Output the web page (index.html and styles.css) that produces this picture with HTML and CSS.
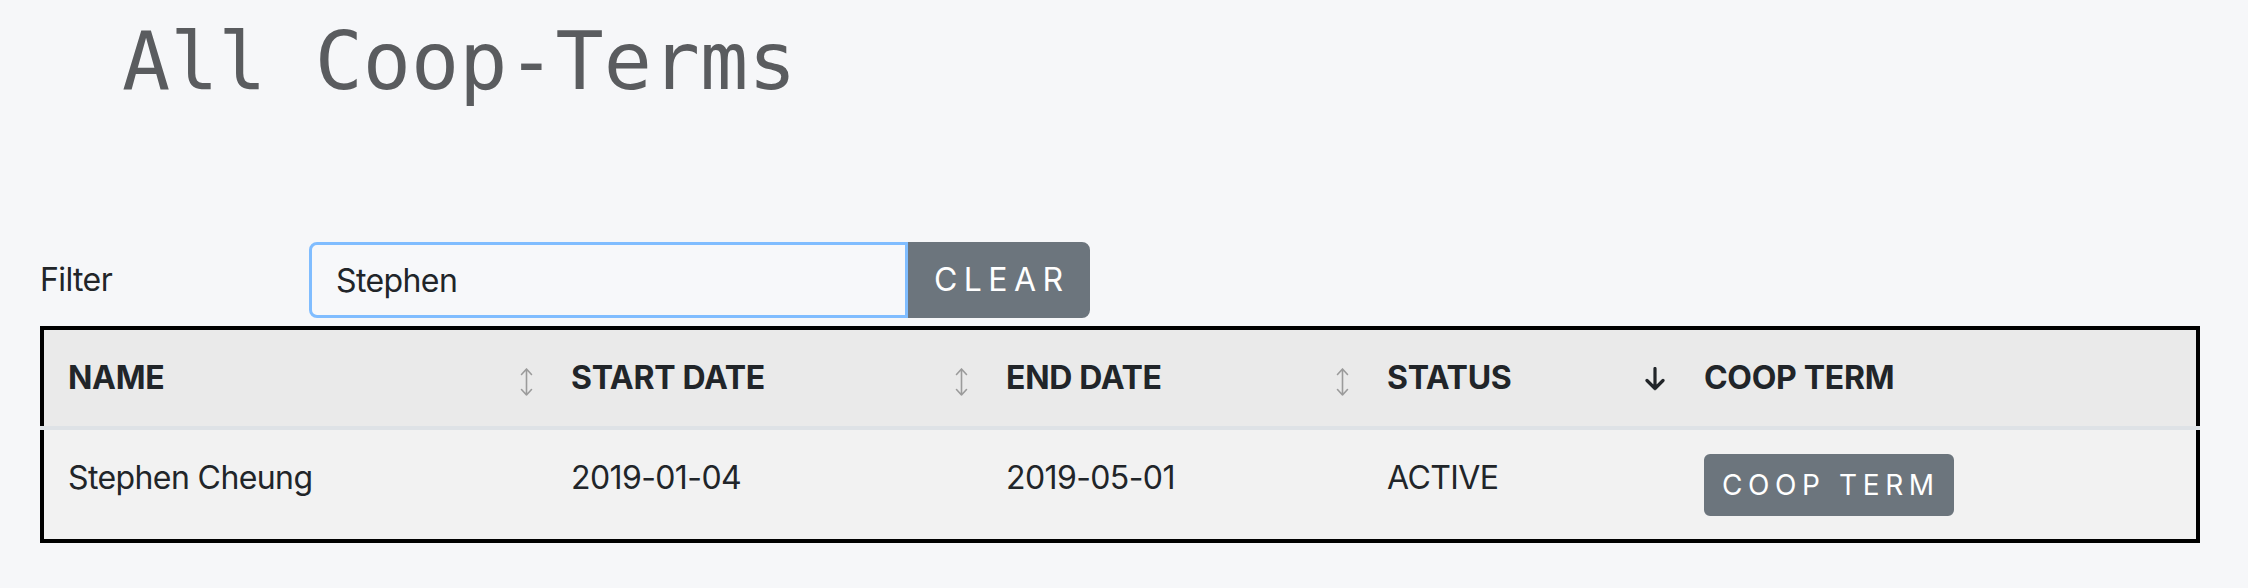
FILE: index.html
```html
<!DOCTYPE html>
<html lang="en">
<head>
<meta charset="utf-8">
<title>All Coop-Terms</title>
<link rel="stylesheet" href="styles.css">
</head>
<body>
<div class="page">
  <h1 class="title">All Coop-Terms</h1>

  <div class="filter-row">
    <label class="filter-label" for="filter">Filter</label>
    <div class="input-group">
      <input id="filter" class="filter-input" type="text" value="Stephen">
      <button class="btn btn-clear" type="button">Clear</button>
    </div>
  </div>

  <div class="grid-table">
    <div class="thead row">
      <div class="th">
        <span>Name</span>
        <svg class="sort-icon" viewBox="0 0 13 30" width="13" height="30"><path d="M6.5 2V28M1.5 7.5L6.5 2L11.5 7.5M1.5 22.5L6.5 28L11.5 22.5" fill="none" stroke="#9b9b9b" stroke-width="1.6" stroke-linecap="round" stroke-linejoin="round"/></svg>
      </div>
      <div class="th">
        <span>Start Date</span>
        <svg class="sort-icon" viewBox="0 0 13 30" width="13" height="30"><path d="M6.5 2V28M1.5 7.5L6.5 2L11.5 7.5M1.5 22.5L6.5 28L11.5 22.5" fill="none" stroke="#9b9b9b" stroke-width="1.6" stroke-linecap="round" stroke-linejoin="round"/></svg>
      </div>
      <div class="th">
        <span>End Date</span>
        <svg class="sort-icon" viewBox="0 0 13 30" width="13" height="30"><path d="M6.5 2V28M1.5 7.5L6.5 2L11.5 7.5M1.5 22.5L6.5 28L11.5 22.5" fill="none" stroke="#9b9b9b" stroke-width="1.6" stroke-linecap="round" stroke-linejoin="round"/></svg>
      </div>
      <div class="th">
        <span>Status</span>
        <svg class="sort-icon sort-active" viewBox="0 0 22 24" width="22" height="24"><path d="M11 1.5V21.5M3 13.5L11 21.5L19 13.5" fill="none" stroke="#212529" stroke-width="3.2" stroke-linecap="round" stroke-linejoin="round"/></svg>
      </div>
      <div class="th">
        <span>Coop Term</span>
      </div>
    </div>
    <div class="sep"></div>
    <div class="tbody row">
      <div class="td">Stephen Cheung</div>
      <div class="td">2019-01-04</div>
      <div class="td">2019-05-01</div>
      <div class="td">ACTIVE</div>
      <div class="td"><button class="btn btn-sm" type="button">Coop Term</button></div>
    </div>
  </div>
</div>
</body>
</html>
```

FILE: styles.css
```css
html, body {
  margin: 0;
  padding: 0;
  background: #f6f7f9;
}

body {
  font-family: Inter, "Noto Sans", "Liberation Sans", sans-serif;
  color: #212529;
  font-size: 32px;
  line-height: 1.5;
}

.page {
  padding: 14px 48px 0 40px;
}

.title {
  margin: 0 0 132px 0;
  padding-left: 82px;
  font-family: "DejaVu Sans Mono", "Liberation Mono", monospace;
  font-weight: 400;
  font-size: 80px;
  line-height: 96px;
  color: #5a5c5f;
}

.filter-row {
  display: flex;
  align-items: center;
  margin-bottom: 8px;
}

.filter-label {
  width: 269px;
  font-size: 32px;
  line-height: 48px;
  letter-spacing: -0.6px;
}

.input-group {
  display: flex;
}

.filter-input {
  box-sizing: border-box;
  width: 599px;
  height: 76px;
  margin: 0;
  padding: 12px 24px;
  border: 3px solid #80bdff;
  border-radius: 8px 0 0 8px;
  background: #f7f8fa;
  color: #212529;
  font-family: Inter, "Noto Sans", "Liberation Sans", sans-serif;
  font-size: 32px;
  line-height: 48px;
  letter-spacing: -0.6px;
  outline: none;
}

.btn {
  box-sizing: border-box;
  margin: 0;
  border: 2px solid #6c757d;
  background: #6c757d;
  color: #ffffff;
  font-family: Inter, "Noto Sans", "Liberation Sans", sans-serif;
  font-weight: 400;
  text-transform: uppercase;
  letter-spacing: 0.2em;
  cursor: pointer;
}

.btn-clear {
  height: 76px;
  width: 182px;
  padding: 12px 18px 12px 24px;
  font-size: 32px;
  line-height: 48px;
  border-radius: 0 8px 8px 0;
  text-align: left;
}

.btn-sm {
  height: 62px;
  padding: 8px 12px 8px 16px;
  font-size: 28px;
  line-height: 42px;
  border-radius: 6px;
  white-space: nowrap;
}

.grid-table {
  border-top: 4px solid #000;
  border-bottom: 4px solid #000;
}

.row {
  display: grid;
  grid-template-columns: 503px 435px 381px 317px 1fr;
  border-left: 4px solid #000;
  border-right: 4px solid #000;
}

.thead {
  background: #eaeaea;
}

.th {
  display: flex;
  align-items: center;
  justify-content: space-between;
  padding: 24px 14px 24px 24px;
  font-weight: 700;
  text-transform: uppercase;
  line-height: 48px;
  letter-spacing: -0.3px;
}

.sort-icon {
  display: block;
  flex: none;
  margin-top: 8px;
}

.sort-active {
  margin-top: 2px;
}

.sep {
  height: 4px;
  background: #dee2e6;
}

.tbody {
  background: #f2f2f2;
}

.td {
  padding: 24px 24px 23px 24px;
  line-height: 48px;
  letter-spacing: -0.6px;
}
```
